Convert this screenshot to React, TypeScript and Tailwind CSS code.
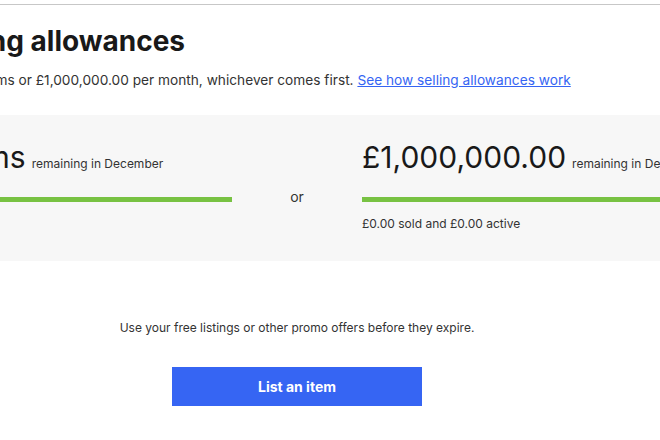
export default function App() {
  return (
    <div className="w-[660px] h-[440px] overflow-hidden bg-white text-[#191919]" style={{ fontFamily: 'Inter, "Noto Sans", sans-serif' }}>
      <div className="h-[4px]" />
      <div className="border-t border-[#c7c7c7]" />
      <div className="ml-[-70px] w-[734px]">
        <h1 className="mt-[19px] ml-[1px] text-[28px] font-bold leading-[34px] whitespace-nowrap">Selling allowances</h1>
        <p className="mt-[12px] ml-[-104px] text-[13.7px] leading-[20px] text-[#333] whitespace-nowrap">
          You can list up to 1,000 items or £1,000,000.00 per month, whichever comes first.{' '}
          <a href="#" className="text-[#3665f3] underline">See how selling allowances work</a>
        </p>
        <div className="mt-[25px] h-[146px] bg-[#f7f7f7] ml-[-110px] mr-[-40px] pr-[40px] pl-[44px] pt-[24px]">
          <div className="grid grid-cols-[368px_130px_302px]">
            <div>
              <div className="flex items-baseline whitespace-nowrap">
                <span className="text-[30px] leading-[36px]">1,000 items</span>
                <span className="ml-[6px] text-[12px] text-[#333]">remaining in December</span>
              </div>
              <div className="mt-[22px] h-[5px] bg-[#78c243]" />
            </div>
            <div className="flex justify-center pt-[48px]">
              <span className="text-[14px] leading-[20px] text-[#333]">or</span>
            </div>
            <div>
              <div className="flex items-baseline whitespace-nowrap">
                <span className="text-[30px] leading-[36px]">£1,000,000.00</span>
                <span className="ml-[6px] text-[12px] text-[#333]">remaining in December</span>
              </div>
              <div className="mt-[22px] h-[5px] bg-[#78c243]" />
              <div className="mt-[14px] text-[12px] leading-[16px] text-[#333]">£0.00 sold and £0.00 active</div>
            </div>
          </div>
        </div>
        <div className="mt-[58px] text-center text-[12px] leading-[18px] text-[#333]">Use your free listings or other promo offers before they expire.</div>
        <div className="mt-[30px] flex justify-center">
          <button className="w-[250px] h-[39px] bg-[#3665f3] text-white text-[14px] font-bold">List an item</button>
        </div>
      </div>
    </div>
  );
}
